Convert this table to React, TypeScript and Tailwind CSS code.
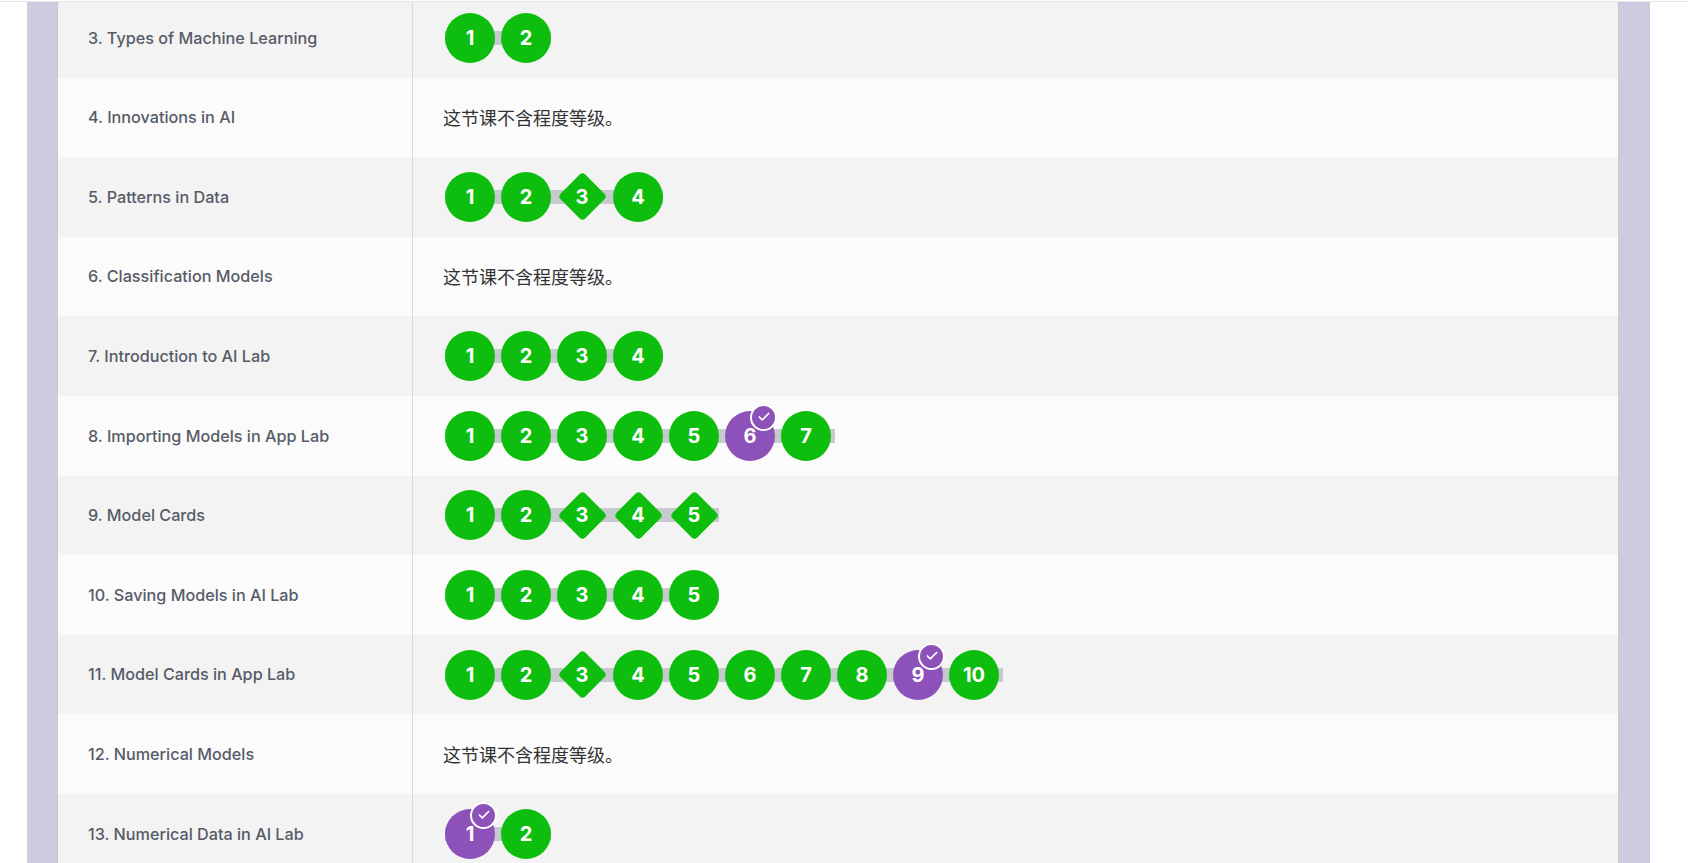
import React from "react"
import { Check } from "lucide-react"

type Level = "c" | "d" | "p"

const rows: { name: string, levels: Level[] | null }[] = [
    { name: "3. Types of Machine Learning", levels: ["c", "c"] },
    { name: "4. Innovations in AI", levels: null },
    { name: "5. Patterns in Data", levels: ["c", "c", "d", "c"] },
    { name: "6. Classification Models", levels: null },
    { name: "7. Introduction to AI Lab", levels: ["c", "c", "c", "c"] },
    { name: "8. Importing Models in App Lab", levels: ["c", "c", "c", "c", "c", "p", "c"] },
    { name: "9. Model Cards", levels: ["c", "c", "d", "d", "d"] },
    { name: "10. Saving Models in AI Lab", levels: ["c", "c", "c", "c", "c"] },
    { name: "11. Model Cards in App Lab", levels: ["c", "c", "d", "c", "c", "c", "c", "c", "p", "c"] },
    { name: "12. Numerical Models", levels: null },
    { name: "13. Numerical Data in AI Lab", levels: ["p", "c"] },
]

function Bubble({ kind, num }: { kind: Level, num: number }) {
    if (kind == "d") {
        return (
            <div className="relative w-[50px] h-[50px] flex items-center justify-center">
                <div className="w-[35px] h-[35px] rotate-45 rounded-[4px] bg-[#0ebe0e]"></div>
                <span className="absolute inset-0 flex items-center justify-center text-white text-[20px] font-bold">{num}</span>
            </div>
        )
    }
    return (
        <div className={`relative w-[50px] h-[50px] rounded-full flex items-center justify-center text-white text-[20px] font-bold ${kind == "p" ? "bg-[#8c52ba]" : "bg-[#0ebe0e]"}`}>
            {num}
            {kind == "p" ?
                <div className="absolute left-[25px] -top-[7px] w-[27px] h-[27px] rounded-full bg-[#8c52ba] border-2 border-white flex items-center justify-center">
                    <Check size={14} strokeWidth={3} color="white" />
                </div> : ""}
        </div>
    )
}

export default function App() {
    return (
        <div className="w-[1688px] h-[863px] overflow-hidden bg-white" style={{ fontFamily: "Inter, 'Noto Sans CJK SC', sans-serif" }}>
            <div className="h-px bg-white"></div>
            <div className="h-px bg-[#e5e5e5]"></div>
            <div className="ml-[27px] w-[1623px] h-[861px] overflow-hidden bg-[#cecadf] pl-[30px] pr-[31px]">
                <div className="-mt-[4px] border-x border-[#c9c9cf]">
                    {rows.map((row, i) => (
                        <div key={row.name} className={`flex h-[79.6px] ${i % 2 == 0 ? "bg-[#f3f3f3]" : "bg-[#fbfbfb]"}`}>
                            <div className="w-[355px] shrink-0 border-r border-[#d9d9d9] pl-[30px] flex items-center text-[16.2px] font-medium text-[#575b68]">
                                {row.name}
                            </div>
                            <div className="flex-1 pl-[30px] flex items-center">
                                {row.levels == null ?
                                    <span className="text-[18px] text-[#333333]" style={{ fontFamily: "'Noto Sans CJK SC', sans-serif" }}>这节课不含程度等级。</span> :
                                    <div className={`relative ml-[2px] flex gap-[6px] ${row.levels.includes("p") && row.levels.length > 2 ? "pr-[4px]" : ""}`}>
                                        <div className="absolute left-0 right-0 top-[18px] h-[14px] bg-[#c6cacd]"></div>
                                        {row.levels.map((l, j) => <Bubble key={j} kind={l} num={j + 1} />)}
                                    </div>
                                }
                            </div>
                        </div>
                    ))}
                </div>
            </div>
        </div>
    )
}
